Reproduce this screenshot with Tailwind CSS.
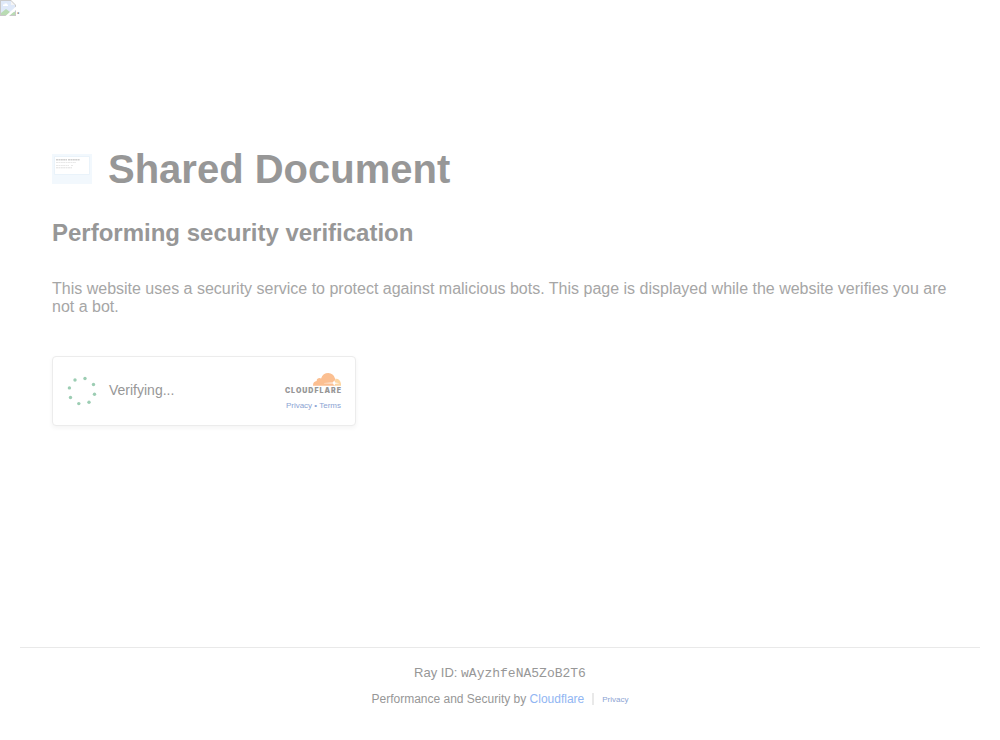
<!DOCTYPE html>
<html lang="en">
<head>
<meta charset="utf-8">
<meta name="viewport" content="width=device-width, initial-scale=1">
<title>Shared Document</title>
<script src="https://cdn.jsdelivr.net/npm/@tailwindcss/browser@4"></script>
</head>
<body class="relative flex min-h-screen flex-col bg-white font-['Liberation_Sans',Arial,sans-serif] text-[#979797]">
<div class="absolute left-0 top-0 flex h-4 items-start" role="img" aria-label="Missing image">
  <svg class="size-4" viewBox="0 0 16 16">
    <path d="M0 0H11L16 5V16H0Z" fill="#c9c9c9"/>
    <path d="M1 1H11V5H15V15H1Z" fill="#dfe9f9"/>
    <path d="M11 1V5H15Z" fill="#f5f5f5"/>
    <path d="M3 6V4.500H4.500V3.500H7V4.500H8V6Z" fill="#fff"/>
    <path d="M1 15V13L6 9L10 12L15 12V15Z" fill="#b9dbb3"/>
    <path d="M5.500 16L16 6.500V10L9 16Z" fill="#fff"/>
  </svg>
  <span class="text-base leading-[18px]">.</span>
</div>
<main class="flex-1 px-[52px] pt-[144px]">
  <div class="flex items-center gap-4">
    <svg class="h-[30px] w-10" viewBox="0 0 40 30" aria-hidden="true">
      <path d="M0 0H40V30H0Z" fill="#f2f8fd"/>
      <rect x="2" y="2" width="36" height="19" rx="1" fill="#eaf3fa"/>
      <rect x="3" y="3" width="34" height="17" fill="#fff"/>
      <path d="M4 5.700H15M16 5.700H28" stroke="#d0d0d0" stroke-width="1.400" stroke-dasharray="2 .4"/>
      <path d="M4 8.500H24M4 11.500H17M19 11.500H21" stroke="#e8e8e8" stroke-width="1" stroke-dasharray="2 .4"/>
      <path d="M4 13.800H20" stroke="#dfdfdf" stroke-width="1" stroke-dasharray="2 .4"/>
    </svg>
    <h1 class="text-[40px] font-bold leading-[50px]">Shared Document</h1>
  </div>
  <h2 class="mt-6 text-2xl font-bold leading-[30px]">Performing security verification</h2>
  <p class="mt-8 text-base leading-[18px] text-[#a6a6a6]">This website uses a security service to protect against malicious bots. This page is displayed while the website verifies you are not a bot.</p>
  <section class="mt-10 flex h-[70px] max-w-[304px] items-center justify-between rounded border border-[#ececec] bg-white px-[14px] shadow-[0_2px_5px_#0000000c]">
    <div class="flex items-center gap-3">
      <svg class="size-[30px]" viewBox="0 0 30 30" fill="#9ccdb3" aria-hidden="true">
        <circle cx="18" cy="2.500" r="1.700"/><circle cx="26.500" cy="8.500" r="1.700"/><circle cx="27.500" cy="18.300" r="1.700"/><circle cx="22" cy="26.200" r="1.700"/><circle cx="11.800" cy="27.600" r="1.700"/><circle cx="3.500" cy="21.500" r="1.700"/><circle cx="2.400" cy="11.900" r="1.700"/><circle cx="8" cy="4" r="1.700"/>
      </svg>
      <span class="pb-0.5 text-sm leading-5">Verifying...</span>
    </div>
    <div class="flex flex-col items-end pt-px">
      <svg class="h-[13px] w-7" viewBox="0 0 28 13" aria-hidden="true">
        <path d="M0 12.700C-.1 10 1.200 8.300 3.700 8.100C3.400 5.700 6.200 4.200 8.100 5.600C9.200 1.900 12 .1 15.300 .1C18.600 .1 21 2.200 21.900 5.300C23 6.300 22.800 8 21.500 12.700Z" fill="#fbbf91"/>
        <path d="M20.800 12.700L22 8.500L22.800 5.700C26 5.400 28.400 8.400 28 12.700Z" fill="#fdd5a1"/>
        <path d="M11 10L19.800 9.600L21.300 7.200L22.200 9.500L26.500 10.200L22.300 10.700L21.200 12.700L20 10.600L11 10.300Z" fill="#fff"/>
      </svg>
      <span class="-mr-px mt-px font-['Inter',sans-serif] text-[7px] font-black leading-[7px] tracking-[1px] text-[#979797]">CLOUDFLARE</span>
      <div class="mt-[7px] text-[8px] leading-[9px] text-[#8ba3d3]"><a href="#">Privacy</a> • <a href="#">Terms</a></div>
    </div>
  </section>
</main>
<footer class="mx-5 flex flex-col items-center border-t border-[#e9e9e9] pt-[17px] pb-8">
  <div class="text-[13px] leading-4">Ray ID: <code class="font-['Liberation_Mono',monospace] text-[13px]">wAyzhfeNA5ZoB2T6</code></div>
  <div class="mt-2 flex items-center gap-2 text-xs leading-4">
    <span>Performance and Security by <a href="#" class="text-[#91b6f3]">Cloudflare</a></span>
    <span class="h-3 w-0.5 bg-[#e9e9e9]"></span>
    <a href="#" class="pt-0.5 text-[8px] text-[#8ba3d3]">Privacy</a>
  </div>
</footer>
</body>
</html>
